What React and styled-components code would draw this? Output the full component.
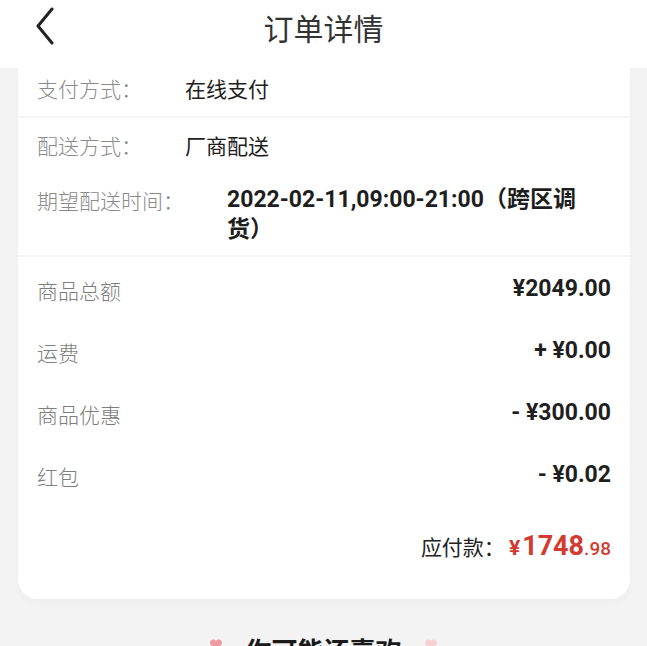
import React from 'react';
import styled, { createGlobalStyle } from 'styled-components';

const GlobalStyle = createGlobalStyle`
	html, body {
		margin: 0;
		padding: 0;
		background: #f3f3f3;
		font-family: "Noto Sans CJK SC", "Noto Sans", sans-serif;
	}
	#root {
		height: 646px;
		overflow: hidden;
	}
`;

const deliveryInfo = [
	{ label: '配送方式：', value: '厂商配送' },
	{ label: '期望配送时间：', value: '2022-02-11,09:00-21:00（跨区调货）', strong: true }
];

const priceRows = [
	{ label: '商品总额', value: '¥2049.00' },
	{ label: '运费', value: '+ ¥0.00' },
	{ label: '商品优惠', value: '- ¥300.00' },
	{ label: '红包', value: '- ¥0.02' }
];

const BackIcon = () => (
	<svg width="24" height="40" viewBox="0 0 24 40" fill="none">
		<path d="M18 4 L4 21 L18 38" stroke="#222" strokeWidth="3" strokeLinecap="round" strokeLinejoin="round" />
	</svg>
);

const Heart = ({ color }) => (
	<svg width="14" height="14" viewBox="0 0 14 14">
		<path d="M7 12 C2 8 1 6 1 4.5 C1 2.5 3 1.5 4.5 1.5 C5.6 1.5 6.5 2.2 7 3 C7.5 2.2 8.4 1.5 9.5 1.5 C11 1.5 13 2.5 13 4.5 C13 6 12 8 7 12 Z" fill={color} />
	</svg>
);

export default function App() {
	return (
		<Page>
			<GlobalStyle />
			<Header>
				<BackButton>
					<BackIcon />
				</BackButton>
				<Title>订单详情</Title>
			</Header>
			<Card>
				<Section className="first">
					<InfoRow>
						<Label>支付方式：</Label>
						<Value>在线支付</Value>
					</InfoRow>
				</Section>
				<Section className="delivery">
					{deliveryInfo.map((item) => (
						<InfoRow key={item.label}>
							<Label>{item.label}</Label>
							<Value strong={item.strong}>{item.value}</Value>
						</InfoRow>
					))}
				</Section>
				<Section>
					{priceRows.map((row) => (
						<PriceRow key={row.label}>
							<PriceLabel>{row.label}</PriceLabel>
							<Amount>{row.value}</Amount>
						</PriceRow>
					))}
					<TotalRow>
						<TotalLabel>应付款：</TotalLabel>
						<TotalAmount>
							<span className="yen">¥</span>
							<span className="int">1748</span>
							<span className="dec">.98</span>
						</TotalAmount>
					</TotalRow>
				</Section>
			</Card>
			<Recommend>
				<Heart color="#ef9aa2" />
				<h2>你可能还喜欢</h2>
				<Heart color="#f6d0d3" />
			</Recommend>
		</Page>
	);
}

const Page = styled.div`
	width: 647px;
	min-height: 646px;
	background: #f3f3f3;
`;

const Header = styled.header`
	position: relative;
	height: 68px;
	background: #fff;
	display: flex;
	align-items: center;
	justify-content: center;
`;

const BackButton = styled.div`
	position: absolute;
	left: 34px;
	top: 5px;
`;

const Title = styled.h1`
	margin: 0 0 14px;
	font-size: 30px;
	font-weight: 400;
	color: #333;
`;

const Card = styled.div`
	margin: 0 17px 0 18px;
	background: #fff;
	border-radius: 0 0 20px 20px;
	box-shadow: 0 6px 10px rgba(0, 0, 0, 0.02);
`;

const Section = styled.div`
	border-bottom: 2px solid #f5f5f5;
	padding: 0 19px;
	&.first {
		height: 50px;
		display: flex;
		align-items: center;
		padding-bottom: 8px;
		box-sizing: border-box;
	}
	&.delivery {
		padding-top: 13px;
		padding-bottom: 10px;
		display: flex;
		flex-direction: column;
		gap: 26px;
	}
	&:last-child {
		border-bottom: none;
		padding-bottom: 32px;
	}
`;

const InfoRow = styled.div`
	display: flex;
	align-items: flex-start;
`;

const Label = styled.span`
	flex-shrink: 0;
	margin-right: 43px;
	font-size: 21px;
	line-height: 29px;
	color: #8a8a8a;
	font-weight: 300;
`;

const Value = styled.span`
	font-size: ${(p) => (p.strong ? '23px' : '21px')};
	line-height: ${(p) => (p.strong ? '30px' : '29px')};
	font-weight: ${(p) => (p.strong ? 700 : 400)};
	max-width: ${(p) => (p.strong ? '362px' : 'none')};
	margin-top: ${(p) => (p.strong ? '-1px' : '0')};
	font-family: ${(p) => (p.strong ? 'Roboto, "Noto Sans CJK SC", sans-serif' : '"Noto Sans CJK SC", sans-serif')};
	color: #1e1e1e;
`;

const PriceRow = styled.div`
	height: 62px;
	display: flex;
	align-items: center;
	justify-content: space-between;
`;

const PriceLabel = styled.span`
	font-size: 21px;
	color: #7d7d7d;
	font-weight: 300;
	margin-top: 3px;
`;

const Amount = styled.span`
	font-family: Roboto, "Noto Sans CJK SC", sans-serif;
	font-size: 23px;
	font-weight: 700;
	color: #1f1f1f;
`;

const TotalRow = styled.div`
	height: 42px;
	margin-top: 20px;
	display: flex;
	align-items: center;
	justify-content: flex-end;
`;

const TotalLabel = styled.span`
	font-size: 21px;
	color: #222;
	margin-right: 4px;
`;

const TotalAmount = styled.span`
	font-family: Roboto, "Noto Sans CJK SC", sans-serif;
	font-weight: 700;
	color: #d23b2f;
	display: flex;
	align-items: baseline;
	.yen {
		font-size: 21px;
		margin-right: 2px;
	}
	.int {
		font-size: 27px;
	}
	.dec {
		font-size: 19px;
		font-weight: 500;
	}
`;

const Recommend = styled.div`
	margin-top: 33px;
	display: flex;
	align-items: flex-start;
	justify-content: center;
	gap: 22px;
	svg {
		margin-top: 6px;
	}
	h2 {
		margin: 0;
		font-size: 26px;
		line-height: 36px;
		font-weight: 700;
		color: #1a1a1a;
	}
`;
